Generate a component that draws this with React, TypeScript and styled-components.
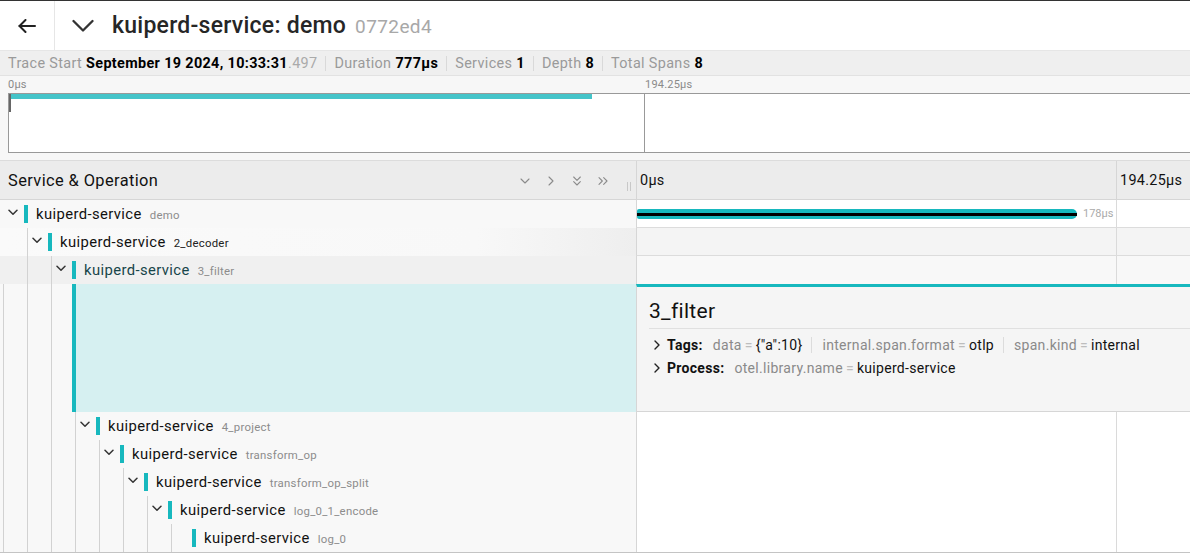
import React from 'react';
import styled, { createGlobalStyle, css } from 'styled-components';
import { ChevronDown, ChevronRight, ChevronsDown, ChevronsRight } from 'lucide-react';

const TEAL = '#17b8be';
const LEFT_W = 636;
const GUIDE = '#d2d2d2';

const GlobalStyle = createGlobalStyle`
  * { box-sizing: border-box; }
  html, body { margin: 0; padding: 0; background: #fff; }
  body {
    font-family: Roboto, "Liberation Sans", Arial, sans-serif;
    color: #000;
    -webkit-font-smoothing: antialiased;
  }
`;

const Page = styled.div`
  width: 1190px;
  height: 554px;
  overflow: hidden;
  display: flex;
  flex-direction: column;
  background: #fff;
  border-top: 1px solid #333;
`;

/* ---------- top bar ---------- */
const TopBar = styled.header`
  display: flex;
  align-items: stretch;
  height: 50px;
  flex: none;
  border-bottom: 1px solid #e6e6e6;
`;

const BackButton = styled.div`
  width: 55px;
  flex: none;
  display: flex;
  align-items: center;
  justify-content: center;
  border-right: 1px solid #e6e6e6;
  color: #222;
`;

const TitleGroup = styled.div`
  display: flex;
  align-items: center;
  padding-left: 17px;
  gap: 18px;
`;

const Title = styled.h1`
  margin: 0;
  font-size: 23px;
  font-weight: 500;
  color: #262626;
  letter-spacing: 0.25px;
`;

const TraceId = styled.span`
  font-size: 19px;
  font-weight: 400;
  color: #a8a8a8;
  margin-left: 9px;
  letter-spacing: 0.4px;
`;

/* ---------- summary ---------- */
const SummaryBar = styled.div`
  height: 25px;
  flex: none;
  display: flex;
  align-items: center;
  padding-left: 8px;
  background: #efefef;
  border-bottom: 1px solid #e2e2e2;
  font-size: 14.4px;
  letter-spacing: 0.35px;
  padding-top: 1px;
`;

const Label = styled.span`
  color: #9a9a9a;
  margin-right: 4px;
`;

const Value = styled.strong`
  color: #000;
  font-weight: 700;
`;

const Frac = styled.span`
  color: #aaa;
`;

const Divider = styled.span`
  width: 1px;
  height: 15px;
  background: #d9d9d9;
  margin: 0 8px;
`;

/* ---------- minimap ---------- */
const Minimap = styled.div`
  height: 84px;
  flex: none;
  display: flex;
  flex-direction: column;
  padding: 0 0 7px 8px;
  background: #f7f7f7;
`;

const TickRow = styled.div`
  height: 17px;
  display: flex;
  align-items: center;
  font-size: 11px;
  color: #8a8a8a;
  letter-spacing: 0.2px;
`;

const TickLabel = styled.span<{ $w?: number }>`
  ${p => p.$w && css`width: ${p.$w}px;`}
  flex: none;
`;

const MiniBox = styled.div`
  flex: 1;
  position: relative;
  background: #fff;
  border: 1px solid #999;
  border-right: none;
`;

const MiniBar = styled.div`
  position: absolute;
  top: 0;
  left: 0;
  height: 5px;
  background: #45c4c9;
`;

const MiniHandle = styled.div`
  position: absolute;
  top: 0;
  left: 0;
  width: 2px;
  height: 18px;
  background: #666;
`;

const MiniTick = styled.div`
  position: absolute;
  top: 0;
  bottom: 0;
  left: 635px;
  width: 1px;
  background: #999;
`;

/* ---------- table ---------- */
const Table = styled.div`
  display: flex;
  flex-direction: column;
  border-bottom: 1px solid #c4c4c4;
`;

const HeaderRow = styled.div`
  height: 40px;
  display: flex;
  background: #ececec;
  border-top: 1px solid #dcdcdc;
  border-bottom: 1px solid #d6d6d6;
`;

const HeaderLeft = styled.div`
  width: ${LEFT_W}px;
  flex: none;
  display: flex;
  align-items: center;
  padding-left: 8px;
  font-size: 16.4px;
  color: #111;
`;

const HeaderTitle = styled.span`
  flex: 1;
  letter-spacing: 0.4px;
`;

const HeaderTools = styled.div`
  display: flex;
  align-items: center;
  gap: 10px;
  color: #8a8a8a;
  margin-top: 1px;
`;

const ResizeHandle = styled.div`
  width: 4px;
  height: 9px;
  margin: 12px 5px 0 16px;
  border-left: 1px solid #c8c8c8;
  border-right: 1px solid #c8c8c8;
  align-self: center;
`;

const HeaderRight = styled.div`
  flex: 1;
  display: flex;
  align-items: center;
  border-left: 1px solid #d6d6d6;
  font-size: 14.4px;
  color: #111;
  letter-spacing: 0.3px;
`;

const AxisCell = styled.div<{ $w?: number }>`
  height: 100%;
  display: flex;
  align-items: center;
  padding-left: 3px;
  ${p => (p.$w ? css`width: ${p.$w}px; border-right: 1px solid #d6d6d6;` : css`flex: 1;`)}
`;

type Variant = 'normal' | 'hovered' | 'expanded';

const guides = (depth: number, outer: boolean) => css`
  ${depth > 0 &&
  css`
    &::before {
      content: '';
      position: absolute;
      top: 0;
      bottom: 0;
      left: 27px;
      width: ${24 * (depth - 1) + 1}px;
      background-image: linear-gradient(90deg, ${GUIDE} 1px, transparent 1px);
      background-size: 24px 100%;
      pointer-events: none;
    }
  `}
  ${outer &&
  css`
    &::after {
      content: '';
      position: absolute;
      top: 0;
      bottom: 0;
      left: 3px;
      width: 1px;
      background: ${GUIDE};
      pointer-events: none;
    }
  `}
`;

const Row = styled.div`
  height: 28px;
  display: flex;
  flex: none;
`;

const NameCell = styled.div<{ $depth: number; $variant: Variant; $outer: boolean }>`
  width: ${LEFT_W}px;
  flex: none;
  display: flex;
  align-items: center;
  position: relative;
  background: ${p =>
    p.$variant === 'hovered'
      ? 'linear-gradient(90deg, #fafafa, #f8f8f8 75%, #eeeeee)'
      : p.$variant === 'expanded'
      ? '#f0f0f0'
      : '#f8f8f8'};
  ${p => guides(p.$depth, p.$outer)}
`;

const Indent = styled.div<{ $depth: number }>`
  width: ${p => p.$depth * 24}px;
  flex: none;
`;

const Toggle = styled.div`
  width: 24px;
  flex: none;
  display: flex;
  align-items: center;
  padding-left: 8px;
  margin-top: -3px;
  color: #333;
`;

const SvcBar = styled.div`
  width: 4px;
  height: 18px;
  flex: none;
  background: ${TEAL};
`;

const SvcName = styled.span<{ $variant: Variant }>`
  margin-left: 8px;
  font-size: 14.8px;
  letter-spacing: 0.4px;
  color: ${p => (p.$variant === 'expanded' ? '#17454a' : '#111')};
  white-space: nowrap;
`;

const OpName = styled.span<{ $variant: Variant }>`
  margin-left: 8px;
  font-size: 11.4px;
  letter-spacing: 0.25px;
  color: ${p => (p.$variant === 'hovered' ? '#222' : '#8c8c8c')};
  white-space: nowrap;
  margin-top: 2px;
`;

const TimelineCell = styled.div<{ $variant: Variant; $lined: boolean }>`
  flex: 1;
  position: relative;
  border-left: 1px solid #d6d6d6;
  background: ${p =>
    p.$variant === 'hovered' ? '#f4f4f4' : p.$variant === 'expanded' ? '#f8f8f8' : '#fff'};
  ${p => p.$lined && css`border-bottom: 1px solid #dcdcdc;`}
  &::after {
    content: '';
    position: absolute;
    top: 0;
    bottom: 0;
    left: 479px;
    width: 1px;
    background: #dadada;
  }
`;

const SpanBar = styled.div`
  position: absolute;
  top: 9px;
  left: 0;
  height: 10px;
  border-radius: 2px 5px 5px 2px;
  background: ${TEAL};
  display: flex;
  align-items: center;
`;

const CriticalPath = styled.div`
  width: 100%;
  height: 3px;
  background: #000;
`;

const BarLabel = styled.span`
  position: absolute;
  top: 7px;
  font-size: 11px;
  color: #aaa;
`;

/* ---------- detail ---------- */
const DetailRow = styled.div`
  height: 128px;
  display: flex;
  flex: none;
`;

const DetailLeft = styled.div<{ $depth: number }>`
  width: ${LEFT_W}px;
  flex: none;
  display: flex;
  position: relative;
  background: #f8f8f8;
  ${p => guides(p.$depth - 1, true)}
`;

const Accent = styled.div`
  flex: 1;
  border-left: 4px solid ${TEAL};
  background: #d6f0f1;
`;

const DetailPanel = styled.div`
  flex: 1;
  background: #f5f5f5;
  border-top: 3px solid ${TEAL};
  border-left: 1px solid #d6d6d6;
  border-bottom: 1px solid #d6d6d6;
  padding-left: 12px;
`;

const DetailTitle = styled.h2`
  margin: 10px 0 0;
  padding-bottom: 3px;
  font-size: 21px;
  line-height: 28px;
  font-weight: 400;
  color: #111;
  letter-spacing: 0.3px;
  border-bottom: 1px solid #e0e0e0;
`;

const KVList = styled.div`
  margin-top: 4px;
  display: flex;
  flex-direction: column;
`;

const KVRow = styled.div`
  height: 23px;
  display: flex;
  align-items: center;
  font-size: 14px;
  letter-spacing: 0.3px;
  white-space: nowrap;
`;

const KVChevron = styled.span`
  display: flex;
  margin: 0 7px 0 5px;
  color: #222;
`;

const KVLabel = styled.strong`
  font-weight: 700;
  color: #111;
  margin-right: 10px;
`;

const KVKey = styled.span`
  color: #8a8a8a;
`;

const KVEq = styled.span`
  color: #bdbdbd;
  margin: 0 3px;
`;

const KVVal = styled.span`
  color: #111;
`;

const KVDivider = styled.span`
  width: 1px;
  height: 16px;
  background: #dcdcdc;
  margin: 0 10px 0 9px;
`;

/* ---------- icons ---------- */
const BackArrow = () => (
  <svg width="18" height="14" viewBox="0 0 18 14" fill="none" stroke="currentColor" strokeWidth="2" strokeLinecap="round" strokeLinejoin="round">
    <line x1="1.5" y1="7" x2="17" y2="7" />
    <polyline points="7.5,1 1.5,7 7.5,13" />
  </svg>
);

const BigChevron = () => (
  <svg width="22" height="14" viewBox="0 0 22 14" fill="none" stroke="#333" strokeWidth="2.3" strokeLinecap="round" strokeLinejoin="round">
    <polyline points="1.5,2 11,11.5 20.5,2" />
  </svg>
);

const TreeChevron = () => (
  <svg width="10" height="7" viewBox="0 0 10 7" fill="none" stroke="currentColor" strokeWidth="1.5" strokeLinecap="round" strokeLinejoin="round">
    <polyline points="1,1.2 5,5.2 9,1.2" />
  </svg>
);

const SmallRight = () => (
  <svg width="6" height="10" viewBox="0 0 6 10" fill="none" stroke="currentColor" strokeWidth="1.4" strokeLinecap="round" strokeLinejoin="round">
    <polyline points="1,1 5,5 1,9" />
  </svg>
);

/* ---------- data ---------- */
interface Span {
  depth: number;
  op: string;
  toggle: boolean;
  variant: Variant;
  bar?: { width: number; label: string };
}

const topSpans: Span[] = [
  { depth: 0, op: 'demo', toggle: true, variant: 'normal', bar: { width: 440, label: '178µs' } },
  { depth: 1, op: '2_decoder', toggle: true, variant: 'hovered' },
  { depth: 2, op: '3_filter', toggle: true, variant: 'expanded' },
];

const restSpans: Span[] = [
  { depth: 3, op: '4_project', toggle: true, variant: 'normal' },
  { depth: 4, op: 'transform_op', toggle: true, variant: 'normal' },
  { depth: 5, op: 'transform_op_split', toggle: true, variant: 'normal' },
  { depth: 6, op: 'log_0_1_encode', toggle: true, variant: 'normal' },
  { depth: 7, op: 'log_0', toggle: false, variant: 'normal' },
];

const tags = [
  { k: 'data', v: '{"a":10}' },
  { k: 'internal.span.format', v: 'otlp' },
  { k: 'span.kind', v: 'internal' },
];

const SpanRow: React.FC<{ span: Span; outer: boolean; lined: boolean }> = ({ span, outer, lined }) => (
  <Row>
    <NameCell $depth={span.depth} $variant={span.variant} $outer={outer}>
      <Indent $depth={span.depth} />
      <Toggle>{span.toggle && <TreeChevron />}</Toggle>
      <SvcBar />
      <SvcName $variant={span.variant}>kuiperd-service</SvcName>
      <OpName $variant={span.variant}>{span.op}</OpName>
    </NameCell>
    <TimelineCell $variant={span.variant} $lined={lined}>
      {span.bar && (
        <>
          <SpanBar style={{ width: span.bar.width }}>
            <CriticalPath />
          </SpanBar>
          <BarLabel style={{ left: span.bar.width + 6 }}>{span.bar.label}</BarLabel>
        </>
      )}
    </TimelineCell>
  </Row>
);

export default function App() {
  return (
    <>
      <GlobalStyle />
      <Page>
        <TopBar>
          <BackButton>
            <BackArrow />
          </BackButton>
          <TitleGroup>
            <BigChevron />
            <Title>
              kuiperd-service: demo<TraceId>0772ed4</TraceId>
            </Title>
          </TitleGroup>
        </TopBar>

        <SummaryBar>
          <Label>Trace Start</Label>
          <Value>September 19 2024, 10:33:31</Value>
          <Frac>.497</Frac>
          <Divider />
          <Label>Duration</Label>
          <Value>777µs</Value>
          <Divider />
          <Label>Services</Label>
          <Value>1</Value>
          <Divider />
          <Label>Depth</Label>
          <Value>8</Value>
          <Divider />
          <Label>Total Spans</Label>
          <Value>8</Value>
        </SummaryBar>

        <Minimap>
          <TickRow>
            <TickLabel $w={637}>0µs</TickLabel>
            <TickLabel>194.25µs</TickLabel>
          </TickRow>
          <MiniBox>
            <MiniBar style={{ width: 583 }} />
            <MiniHandle />
            <MiniTick />
          </MiniBox>
        </Minimap>

        <Table>
          <HeaderRow>
            <HeaderLeft>
              <HeaderTitle>Service &amp; Operation</HeaderTitle>
              <HeaderTools>
                <ChevronDown size={16} strokeWidth={1.6} />
                <ChevronRight size={16} strokeWidth={1.6} />
                <ChevronsDown size={16} strokeWidth={1.6} />
                <ChevronsRight size={16} strokeWidth={1.6} />
              </HeaderTools>
              <ResizeHandle />
            </HeaderLeft>
            <HeaderRight>
              <AxisCell $w={480}>0µs</AxisCell>
              <AxisCell>194.25µs</AxisCell>
            </HeaderRight>
          </HeaderRow>

          {topSpans.map((s, i) => (
            <SpanRow key={s.op} span={s} outer={false} lined={i < 2} />
          ))}

          <DetailRow>
            <DetailLeft $depth={3}>
              <Indent $depth={3} />
              <Accent />
            </DetailLeft>
            <DetailPanel>
              <DetailTitle>3_filter</DetailTitle>
              <KVList>
                <KVRow>
                  <KVChevron>
                    <SmallRight />
                  </KVChevron>
                  <KVLabel>Tags:</KVLabel>
                  {tags.map((t, i) => (
                    <React.Fragment key={t.k}>
                      {i > 0 && <KVDivider />}
                      <KVKey>{t.k}</KVKey>
                      <KVEq>=</KVEq>
                      <KVVal>{t.v}</KVVal>
                    </React.Fragment>
                  ))}
                </KVRow>
                <KVRow>
                  <KVChevron>
                    <SmallRight />
                  </KVChevron>
                  <KVLabel>Process:</KVLabel>
                  <KVKey>otel.library.name</KVKey>
                  <KVEq>=</KVEq>
                  <KVVal>kuiperd-service</KVVal>
                </KVRow>
              </KVList>
            </DetailPanel>
          </DetailRow>

          {restSpans.map(s => (
            <SpanRow key={s.op} span={s} outer lined={false} />
          ))}
        </Table>
      </Page>
    </>
  );
}
